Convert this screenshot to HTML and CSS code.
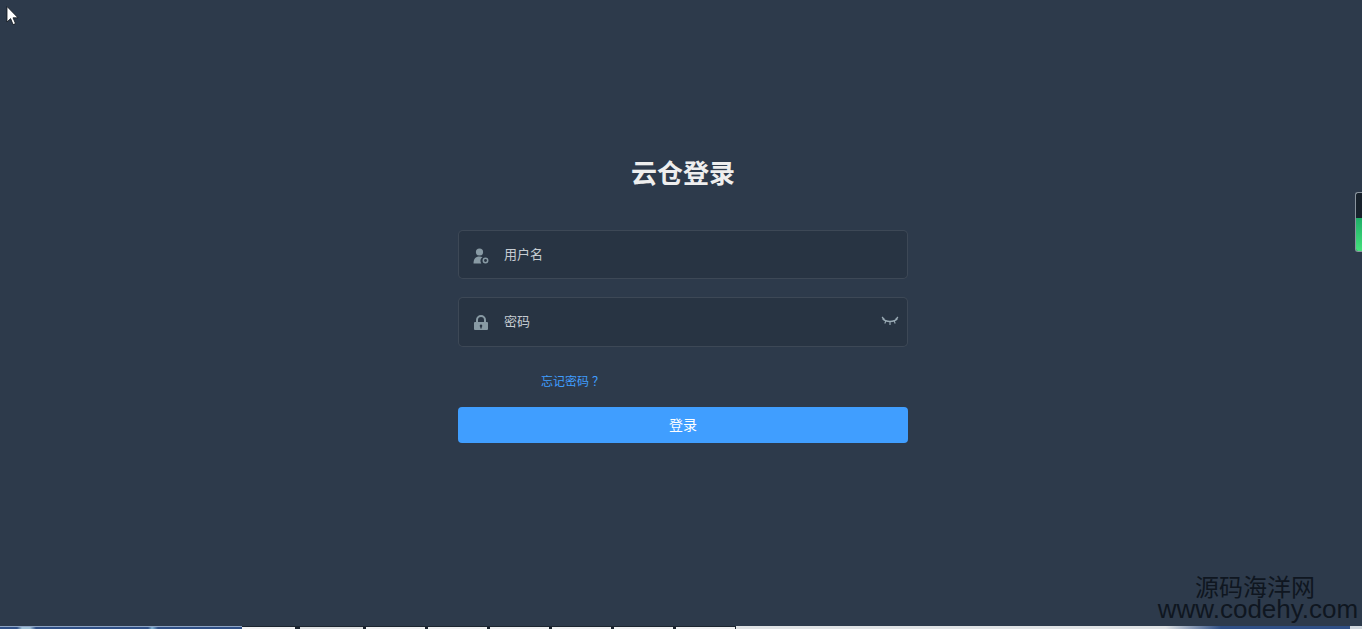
FILE: index.html
```html
<!DOCTYPE html>
<html lang="zh-CN">
<head>
<meta charset="utf-8">
<title>云仓登录</title>
<link rel="stylesheet" href="styles.css">
</head>
<body>
<div class="page">
  <main class="main">
    <form class="login">
      <h1 class="title">云仓登录</h1>
      <div class="field field-user">
        <svg class="icon" viewBox="0 0 16 16" width="16" height="16"><circle cx="6.5" cy="4" r="3.6" fill="#889aa4"/><path d="M0.5 15.5c0-4.500 2-7 6-7 1.200 0 2.200.2 3 .7-1.500 1-2.300 2.500-2 4.300.1.800.4 1.500.8 2z" fill="#889aa4"/><circle cx="12.500" cy="12.500" r="2.200" fill="none" stroke="#889aa4" stroke-width="1.500"/></svg>
        <input class="input" type="text" placeholder="用户名">
      </div>
      <div class="field field-pass">
        <svg class="icon" viewBox="0 0 16 16" width="16" height="16"><path d="M4 7V5a4 4 0 0 1 8 0v2" fill="none" stroke="#889aa4" stroke-width="2"/><path fill-rule="evenodd" d="M2 7h12a1 1 0 0 1 1 1v6a1 1 0 0 1-1 1H2a1 1 0 0 1-1-1V8a1 1 0 0 1 1-1zm6 2.500a1.300 1.300 0 0 0-.7 2.400V13.500h1.400v-1.600A1.300 1.300 0 0 0 8 9.500z" fill="#889aa4"/></svg>
        <input class="input input-pass" type="text" placeholder="密码">
        <svg class="eye" viewBox="0 0 18 10" width="18" height="10"><path d="M1.500 2.500C5 6.500 13 6.500 16.500 2.500" fill="none" stroke="#9aabb5" stroke-width="1.300"/><path d="M1 1l2.500 2.500M5 4.500L3.800 7.500M9 5.500V9M13 4.500l1.200 3M17 1l-2.500 2.500" fill="none" stroke="#9aabb5" stroke-width="1.100"/></svg>
      </div>
      <a class="forgot" href="#">忘记密码<span class="forgot-mark">？</span></a>
      <button class="submit" type="button">登录</button>
    </form>
  </main>
  <footer class="taskbar">
    <div class="start"></div>
    <div class="tabs">
      <div class="tab tab-first"></div><div class="tab tab-a"></div><div class="tab"></div><div class="tab"></div><div class="tab"></div><div class="tab"></div><div class="tab"></div><div class="tab"></div>
    </div>
    <div class="tray"></div>
    <div class="tray-end"></div>
  </footer>
  <div class="watermark">
    <div class="wm-cn">源码海洋网</div>
    <div class="wm-en">www.codehy.com</div>
  </div>
  <div class="gauge"><div class="gauge-fill"></div></div>
  <svg class="cursor" viewBox="0 0 13 20" width="13" height="20"><path d="M1 0.500V16l3.600-3.400 2.500 6 2.400-1-2.500-5.800H12z" fill="#fff" stroke="#10151c" stroke-width=".8"/></svg>
</div>
</body>
</html>
```
FILE: styles.css
```css
* { box-sizing: border-box; }
html, body { margin: 0; height: 100%; overflow: hidden; }
body { font-family: "Liberation Sans", "Noto Sans CJK SC", sans-serif; background: #2d3a4b; }
.page { position: relative; height: 629px; display: flex; flex-direction: column; background: #2d3a4b; }
.main { flex: 1; display: flex; justify-content: center; padding: 156px 0 0 4px; }
.login { width: 450px; display: flex; flex-direction: column; }
.title { margin: 0 0 36px; height: 38px; line-height: 36px; font-size: 26px; font-weight: 700; color: #eee; text-align: center; }
.field { display: flex; align-items: center; background: #283443; border: 1px solid rgba(255,255,255,.1); border-radius: 5px; padding: 0 10px 0 14px; }
.field-user { height: 49px; margin-bottom: 18px; }
.field-pass { height: 50px; margin-bottom: 24px; }
.icon { flex: none; margin-top: 2px; }
.input { flex: 1; min-width: 0; height: 100%; margin-left: 15px; padding: 0; border: 0; outline: 0; background: transparent; color: #fff; font: 13px "Liberation Sans", "Noto Sans CJK SC", sans-serif; }
.input-pass { padding-bottom: 2px; }
.input::placeholder { color: #c6ccd2; opacity: 1; }
.eye { flex: none; margin: -2px -2px 0 0; }
.forgot { align-self: flex-start; margin-left: 83px; height: 22px; line-height: 20px; font-size: 12px; color: #409eff; text-decoration: none; font-family: "Noto Sans CJK TC", sans-serif; }
.forgot-mark { margin-left: 3px; }
.submit { height: 36px; margin-top: 14px; padding: 0 0 3px; border: 0; border-radius: 4px; background: #409eff; color: #fff; font: 14px "Liberation Sans", "Noto Sans CJK SC", sans-serif; }
.taskbar { flex: none; height: 3px; display: flex; }
.start { width: 242px; border-top: 1px solid #8fa5c4; background: linear-gradient(90deg, #2f4f86 0, #2f4f86 17px, #9fc0d8 22px, #9fc0d8 30px, #2f4f86 36px, #2f4f86 148px, #7fb0d0 152px, #2f4f86 158px, #2f4f86 100%); }
.tabs { display: flex; gap: 3px; padding-right: 1px; background: #1c2530; }
.tab { width: 59px; background: #f0f1f2; border-top: 1px solid #1c2530; }
.tab-first { width: 53px; }
.tab-a { width: 63px; margin-left: 2px; background: #dfe1e2; }
.tray { flex: 1; background: linear-gradient(90deg, #dfe2e4 0, #dfe2e4 70%, #2f4f86 79%, #2f4f86 100%); }
.tray-end { width: 12px; background: #cfd6dc; }
.watermark { position: absolute; left: 1154px; top: 574px; width: 208px; text-align: center; color: #0f1620; }
.wm-cn { padding-right: 6px; font-size: 24px; line-height: 24px; font-family: "Noto Sans CJK SC", sans-serif; }
.wm-en { font-size: 26px; line-height: 22px; white-space: nowrap; font-family: "Liberation Sans", sans-serif; }
.gauge { position: absolute; left: 1355px; top: 192px; width: 7px; height: 60px; background: #18222c; border: 1px solid #8a949e; border-right: 0; border-radius: 3px 0 0 3px; overflow: hidden; display: flex; flex-direction: column; justify-content: flex-end; }
.gauge-fill { height: 33px; background: linear-gradient(#1fae68, #45e07c); }
.cursor { position: absolute; left: 6px; top: 6px; }
```
